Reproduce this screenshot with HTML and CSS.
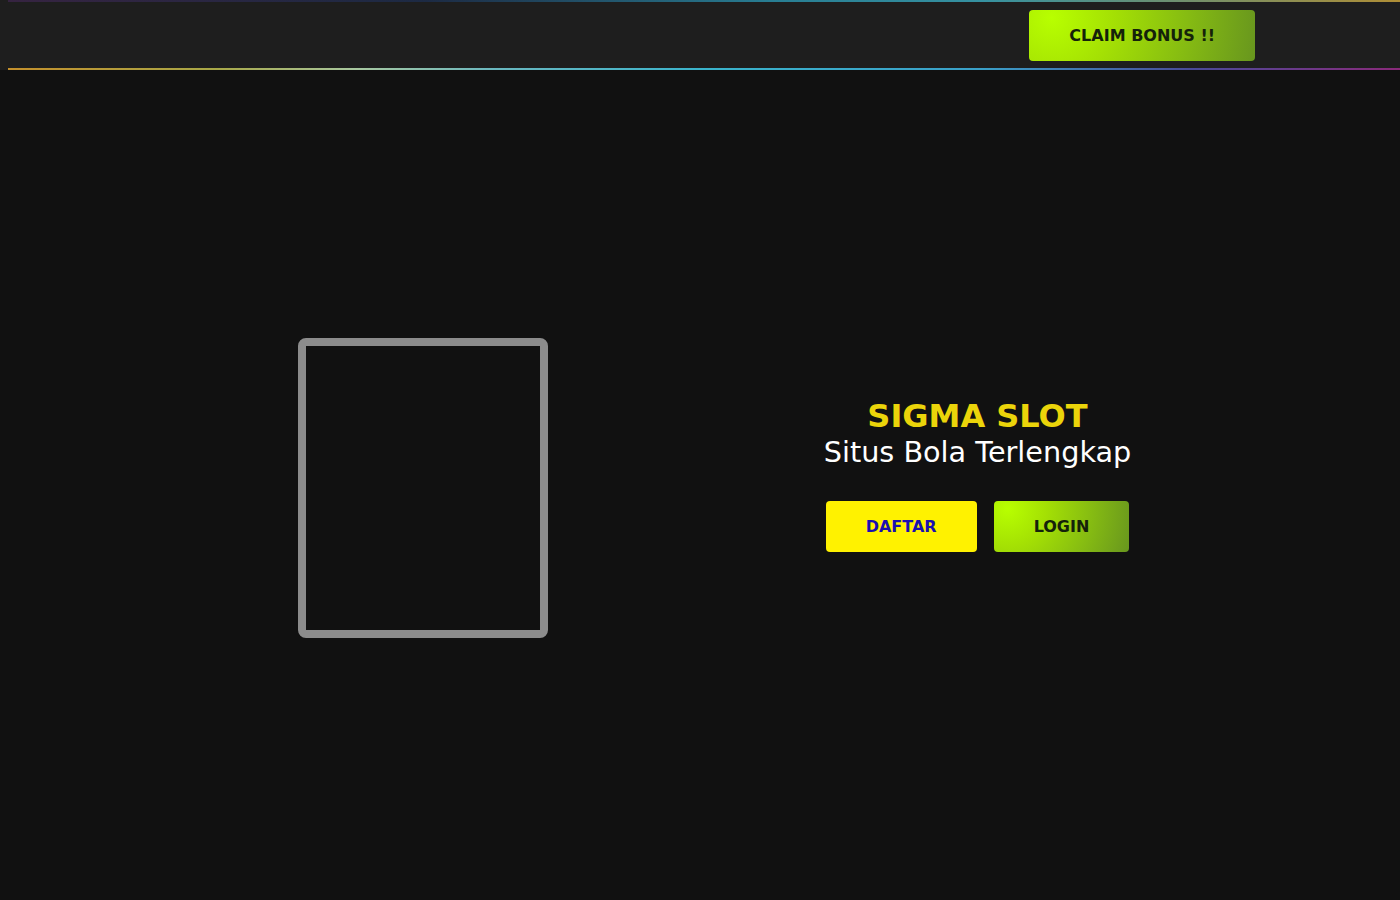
FILE: index.html
```html
<!DOCTYPE html>
<html lang="id">
<head>
  <meta charset="UTF-8" />
  <meta name="viewport" content="width=device-width, initial-scale=1.0" />
  <title>SIGMA SLOT - Situs Bola Terlengkap</title>
  <link rel="stylesheet" href="styles.css">
</head>
<body>
  <header class="topbar">
    <div class="container topbar-inner">
      <a href="#" class="btn btn-green">CLAIM BONUS !!</a>
    </div>
  </header>

  <main class="hero">
    <div class="container hero-row">
      <div class="hero-col">
        <div class="banner-frame"></div>
      </div>
      <div class="hero-col hero-text">
        <h1 class="brand">SIGMA SLOT</h1>
        <p class="tagline">Situs Bola Terlengkap</p>
        <div class="actions">
          <a href="#" class="btn btn-yellow">DAFTAR</a>
          <a href="#" class="btn btn-green">LOGIN</a>
        </div>
      </div>
    </div>
  </main>
</body>
</html>
```

FILE: styles.css
```css
:root {
  --bg: #111111;
  --bar: #1e1e1e;
  --yellow: #fff200;
  --brand: #ebd40a;
}
* {
  box-sizing: border-box;
}
body {
  margin: 0;
  background: var(--bg);
  font-family: 'DejaVu Sans', Verdana, sans-serif;
  color: #fff;
}
.container {
  width: 1110px;
  margin: 0 auto;
}
.topbar {
  position: relative;
  height: 70px;
  background: var(--bar);
}
.topbar::before,
.topbar::after {
  content: "";
  position: absolute;
  left: 8px;
  right: 0;
  height: 2px;
}
.topbar::before {
  top: 0;
  background: linear-gradient(to right, #3a2447, #1c2c4a 30%, #2a8fa8 55%, #3aa6b8 70%, #c9a23a 100%);
  opacity: 0.85;
}
.topbar::after {
  bottom: 0;
  background: linear-gradient(to right, #c4902c, #a8a848 15%, #a8c8a0 25%, #6ab8c0 35%, #3ab4cc 50%, #3aa0c8 70%, #4a4a9a 85%, #8a2a7a 100%);
}
.topbar-inner {
  display: flex;
  justify-content: flex-end;
  align-items: center;
  height: 100%;
}
.btn {
  display: inline-block;
  padding: 16px 40px;
  border-radius: 4px;
  font-size: 16px;
  line-height: 19px;
  font-weight: bold;
  text-decoration: none;
  color: #14220a;
}
.btn-green {
  background: radial-gradient(circle farthest-corner at 10% 15%, #b8ff00 0%, #a4e004 30%, #86bc12 65%, #68961e 100%);
}
.btn-yellow {
  background: var(--yellow);
  color: #1a0fb0;
}
.hero {
  min-height: calc(100vh - 70px);
  padding-top: 6px;
  display: flex;
  align-items: center;
}
.hero-row {
  display: flex;
  align-items: center;
}
.hero-col {
  flex: 1;
  display: flex;
  justify-content: center;
}
.banner-frame {
  width: 250px;
  height: 300px;
  border: 8px solid #8c8c8c;
  border-radius: 8px;
}
.hero-text {
  flex-direction: column;
  align-items: center;
  text-align: center;
  padding-bottom: 27px;
}
.brand {
  margin: 0;
  font-size: 32px;
  line-height: 38px;
  color: var(--brand);
}
.tagline {
  margin: 0;
  font-size: 28.7px;
  line-height: 35px;
}
.actions {
  display: flex;
  gap: 17px;
  margin-top: 31px;
}
```
